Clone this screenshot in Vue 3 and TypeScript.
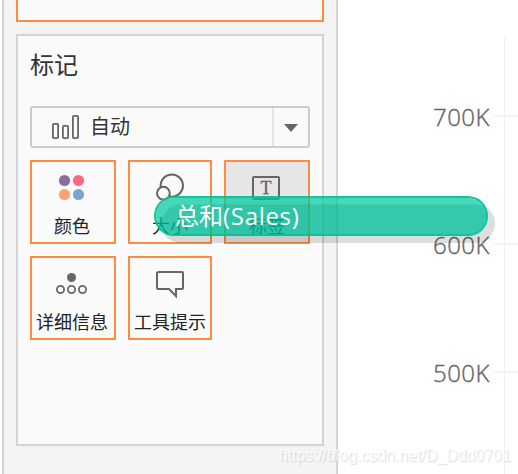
<script setup lang="ts">
interface Tile {
  id: string
  label: string
  active?: boolean
}

const tiles: Tile[] = [
  { id: 'color', label: '颜色' },
  { id: 'size', label: '大小' },
  { id: 'label', label: '标签', active: true },
  { id: 'detail', label: '详细信息' },
  { id: 'tooltip', label: '工具提示' },
]

const ticks: string[] = ['700K', '600K', '500K']
</script>

<template>
  <div class="workspace">
    <aside class="sidebar">
      <section class="filters"></section>
      <section class="marks">
        <h2 class="title">标记</h2>
        <div class="select">
          <svg class="bars" width="28" height="26" viewBox="0 0 28 26" fill="none" stroke="#666" stroke-width="1.8">
            <rect x="0.9" y="8.9" width="5.2" height="14.2" rx="1" />
            <rect x="10.9" y="10.9" width="5.2" height="12.2" rx="1" />
            <rect x="20.9" y="0.9" width="5.2" height="22.2" rx="1" />
          </svg>
          <span class="select-text">自动</span>
          <span class="select-arrow">
            <svg width="14" height="8" viewBox="0 0 14 8"><path d="M0 0H14L7 8Z" fill="#666" /></svg>
          </span>
        </div>
        <div class="tiles">
          <div v-for="tile in tiles" :key="tile.id" class="tile" :class="{ active: tile.active }">
            <svg class="icon" width="40" height="36" viewBox="0 0 40 36" fill="none" stroke="#666" stroke-width="2">
              <g v-if="tile.id === 'color'" stroke="none">
                <circle cx="11.5" cy="8.5" r="5.6" fill="#8a6f9c" />
                <circle cx="25.5" cy="8.5" r="5.6" fill="#ff6680" />
                <circle cx="11.5" cy="22.5" r="5.6" fill="#ffa070" />
                <circle cx="25.5" cy="22.5" r="5.6" fill="#7aa5cf" />
              </g>
              <g v-else-if="tile.id === 'size'">
                <circle cx="21.8" cy="13.6" r="11.2" />
                <circle cx="13.4" cy="21.2" r="6.4" fill="#fafafa" />
              </g>
              <g v-else-if="tile.id === 'label'">
                <rect x="6" y="5" width="26" height="22" rx="1" />
                <text x="19" y="22" class="glyph">T</text>
              </g>
              <g v-else-if="tile.id === 'detail'">
                <circle cx="18.5" cy="9.5" r="4.5" fill="#666" stroke="none" />
                <circle cx="7.5" cy="21.5" r="3.6" stroke-width="1.8" />
                <circle cx="18.5" cy="21.5" r="3.6" stroke-width="1.8" />
                <circle cx="29.5" cy="21.5" r="3.6" stroke-width="1.8" />
              </g>
              <path v-else d="M9 4H32Q33 4 33 5V20Q33 21 32 21H26V28L19 21H9Q7 21 7 20V5Q7 4 9 4Z" />
            </svg>
            <span class="tile-label">{{ tile.label }}</span>
          </div>
        </div>
      </section>
    </aside>
    <main class="chart">
      <div v-for="tick in ticks" :key="tick" class="tick">
        <span class="tick-label">{{ tick }}</span>
        <span class="tick-line"></span>
      </div>
      <div class="axis"></div>
    </main>
    <div class="pill-shadow"></div>
    <div class="pill"><span class="pill-text">总和<span class="latin">(Sales)</span></span></div>
    <div class="watermark">https://blog.csdn.net/D_Ddd0701</div>
  </div>
</template>

<style>
body {
  background: #fff;
}
</style>

<style scoped>
.workspace {
  position: relative;
  display: flex;
  width: 518px;
  height: 474px;
  overflow: hidden;
  box-sizing: border-box;
  padding-left: 2px;
  background: #fff;
  font-family: "Open Sans", "Noto Sans CJK SC", sans-serif;
}

.workspace * {
  box-sizing: border-box;
}

.sidebar {
  width: 336px;
  flex: none;
  padding: 0 12px;
  border: 2px solid #d4d4d4;
  border-width: 0 2px;
  background: #f4f4f4;
}

.filters {
  height: 22px;
  margin-bottom: 12px;
  border: 2px solid #ff8b3d;
  border-top: 0;
  background: #fafafa;
}

.marks {
  height: 412px;
  padding: 12px;
  border: 2px solid #d4d4d4;
  background: #fafafa;
}

.title {
  height: 58px;
  margin: 0;
  font-family: "Noto Sans CJK SC", sans-serif;
  font-size: 24px;
  line-height: 31px;
  font-weight: 400;
  color: #333;
}

.select {
  display: flex;
  align-items: center;
  width: 280px;
  height: 42px;
  margin-bottom: 12px;
  padding-left: 20px;
  border: 2px solid #ccc;
  border-radius: 3px;
}

.bars {
  flex: none;
  margin-top: 2px;
}

.select-text {
  flex: 1;
  margin-left: 10px;
  padding-bottom: 2px;
  font-family: "Noto Sans CJK SC", sans-serif;
  font-size: 20px;
  line-height: 36px;
  color: #333;
}

.select-arrow {
  display: flex;
  align-items: center;
  justify-content: center;
  width: 36px;
  height: 38px;
  padding-top: 2px;
  border-left: 2px solid #e4e4e4;
}

.tiles {
  display: grid;
  grid-template-columns: 86px 84px 86px;
  grid-auto-rows: 84px;
  gap: 12px;
}

.tile {
  display: flex;
  flex-direction: column;
  align-items: center;
  padding-top: 10px;
  border: 2px solid #ff8b3d;
}

.tile:nth-child(3n + 1) .tile-label {
  padding-right: 2px;
}

.tile.active {
  background: #e6e6e6;
}

.icon {
  flex: none;
}

.glyph {
  font-family: "Liberation Serif", serif;
  font-size: 18px;
  text-anchor: middle;
  fill: #666;
  stroke: #666;
  stroke-width: 0.3px;
}

.tile-label {
  font-family: "Noto Sans CJK SC", sans-serif;
  font-size: 18px;
  line-height: 26px;
  margin-top: 4px;
  white-space: nowrap;
  color: #222;
}

.chart {
  position: relative;
  flex: 1;
  padding-top: 101px;
}

.tick {
  display: flex;
  align-items: center;
  justify-content: flex-end;
  height: 32px;
  margin-bottom: 96px;
}

.tick-label {
  font-size: 24px;
  line-height: 32px;
  font-weight: 300;
  letter-spacing: 0.5px;
  -webkit-text-stroke: 0.4px #666;
  color: #666;
}

.tick-line {
  width: 24px;
  height: 2px;
  margin: 0 0 2px 4px;
  background: #f3f3f3;
}

.axis {
  position: absolute;
  top: 36px;
  bottom: 0;
  right: 13px;
  width: 1px;
  background: #f0f0f0;
}

.pill-shadow,
.pill {
  position: absolute;
  width: 334px;
  height: 40px;
  border-radius: 20px;
}

.pill-shadow {
  left: 161px;
  top: 204px;
  height: 39px;
  background: rgba(0, 0, 0, 0.13);
}

.pill {
  left: 154px;
  top: 196px;
  padding-left: 19px;
  overflow: hidden;
  border: 2px solid rgba(0, 195, 152, 0.95);
  background: rgba(0, 200, 158, 0.72);
  background-clip: padding-box;
  font-size: 24px;
  line-height: 35px;
  color: #fff;
}

.pill::before {
  content: "";
  position: absolute;
  left: 6px;
  top: 7px;
  width: 334px;
  height: 39px;
  border-radius: 20px;
  background: rgba(0, 180, 140, 0.17);
}

.pill-text {
  position: relative;
}

.latin {
  letter-spacing: 0.7px;
}

.watermark {
  position: absolute;
  left: 279px;
  top: 446px;
  font-family: "Liberation Sans", sans-serif;
  font-size: 16px;
  line-height: 20px;
  letter-spacing: -0.04px;
  color: rgba(255, 255, 255, 0.85);
  text-shadow: 1px 1px 1px rgba(0, 0, 0, 0.14);
  white-space: nowrap;
}
</style>
